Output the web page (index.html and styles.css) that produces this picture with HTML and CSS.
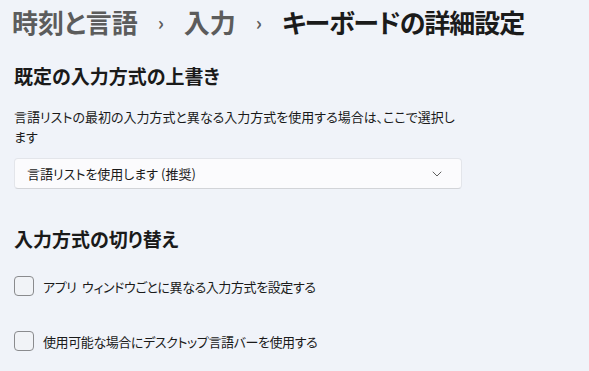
FILE: index.html
```html
<!DOCTYPE html>
<html lang="ja">
<head>
    <meta charset="UTF-8">
    <meta name="viewport" content="width=device-width, initial-scale=1.0">
    <title>キーボードの詳細設定</title>
    <link rel="stylesheet" href="styles.css">
</head>
<body>
    <div class="page">
        <h1 class="breadcrumb">
            <span class="crumb">時刻と言語</span>
            <span class="sep">›</span>
            <span class="crumb">入力</span>
            <span class="sep">›</span>
            <span class="current">キーボードの詳細設定</span>
        </h1>

        <section class="group">
            <h2>既定の入力方式の上書き</h2>
            <p class="desc">言語リストの最初の入力方式と異なる入力方式を使用する場合は、ここで選択します</p>
            <div class="select">
                <span>言語リストを使用します (推奨)</span>
                <svg class="chevron" width="10" height="6" viewBox="0 0 10 6">
                    <path d="M1 1 L5 5 L9 1" fill="none" stroke="#5f5f5f" stroke-width="1" stroke-linecap="round" stroke-linejoin="round"/>
                </svg>
            </div>
        </section>

        <section class="group switch">
            <h2>入力方式の切り替え</h2>
            <label class="check">
                <span class="box"></span>
                <span>アプリ ウィンドウごとに異なる入力方式を設定する</span>
            </label>
            <label class="check">
                <span class="box"></span>
                <span>使用可能な場合にデスクトップ言語バーを使用する</span>
            </label>
        </section>
    </div>
</body>
</html>
```

FILE: styles.css
```css
/* Base */
* {
    margin: 0;
    padding: 0;
    box-sizing: border-box;
}

body {
    background-color: #f0f3f9;
    font-family: 'Noto Sans CJK JP', 'Noto Sans', sans-serif;
    font-feature-settings: "palt";
    color: #1a1a1a;
    overflow: hidden;
}

.page {
    padding: 4px 0 0 12px;
}

/* Breadcrumb title */
.breadcrumb {
    display: flex;
    align-items: center;
    gap: 18px;
    font-size: 26px;
    font-weight: 600;
    line-height: 36px;
    white-space: nowrap;
}

.crumb {
    color: #5c5c5c;
}

.sep {
    color: #5c5c5c;
    font-size: 19px;
    margin: 0 2px;
}

.current {
    color: #1b1b1b;
    letter-spacing: -1px;
}

/* Groups */
.group {
    padding-left: 2px;
}

.group h2 {
    font-size: 19px;
    font-weight: 700;
    line-height: 28px;
    margin-top: 22px;
}

.switch h2 {
    margin-top: 36px;
}

.desc {
    font-size: 13px;
    line-height: 20px;
    width: 448px;
    margin-top: 17px;
}

/* Dropdown */
.select {
    display: flex;
    align-items: center;
    justify-content: space-between;
    width: 448px;
    height: 31px;
    margin-top: 11px;
    padding: 0 19px 0 12px;
    background-color: #fbfbfd;
    border: 1px solid #e3e5ea;
    border-bottom-color: #d2d4d8;
    border-radius: 4px;
    font-size: 13px;
}

/* Checkboxes */
.check {
    display: flex;
    align-items: center;
    gap: 9px;
    height: 20px;
    font-size: 13px;
    letter-spacing: -0.4px;
    word-spacing: 3px;
}

.group h2 + .check {
    margin-top: 23px;
}

.check + .check {
    margin-top: 35px;
}

.box {
    width: 20px;
    height: 20px;
    border: 1px solid #8a8b8e;
    border-radius: 4px;
    background-color: #f1f3f7;
}
```
